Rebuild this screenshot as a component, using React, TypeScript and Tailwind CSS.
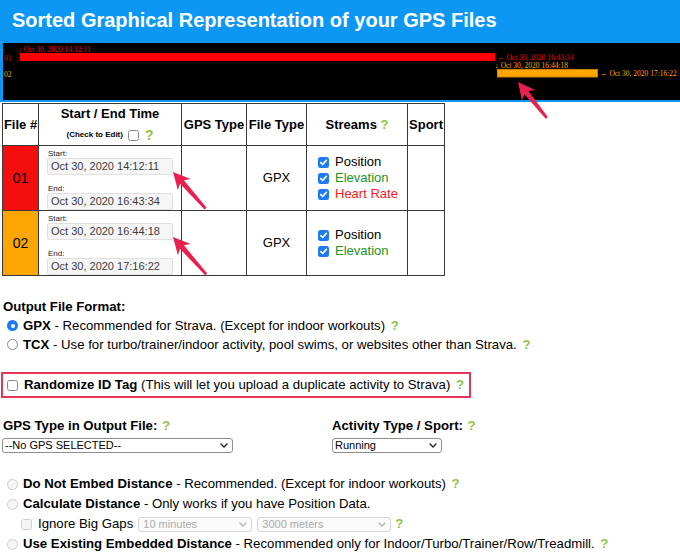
import React from "react";

const Q = ({ className = "" }: { className?: string }) => (
  <span className={"font-bold text-[#8cc63f] " + className}>?</span>
);

function CheckOn() {
  return (
    <span className="inline-flex w-[11px] h-[11px] rounded-[2.5px] bg-[#1e7bf2] items-center justify-center shrink-0">
      <svg width="9" height="9" viewBox="0 0 9 9">
        <path d="M1.8 4.6 L3.7 6.5 L7.3 2.4" fill="none" stroke="white" strokeWidth="1.7" strokeLinecap="round" strokeLinejoin="round" />
      </svg>
    </span>
  );
}

function CheckOff({ light }: { light?: boolean }) {
  return (
    <span
      className={
        light
          ? "inline-block w-[11px] h-[11px] rounded-[2.5px] border border-[#cfcfcf] bg-[#f5f5f5] shrink-0"
          : "inline-block w-[11px] h-[11px] rounded-[2.5px] border border-[#8a8a8a] bg-white shrink-0"
      }
    />
  );
}

function RadioOn() {
  return (
    <span className="inline-flex w-[11px] h-[11px] rounded-full bg-[#1e7bf2] items-center justify-center shrink-0">
      <span className="w-[4px] h-[4px] rounded-full bg-white" />
    </span>
  );
}

function RadioOff({ light }: { light?: boolean }) {
  return (
    <span
      className={
        light
          ? "inline-block w-[11px] h-[11px] rounded-full border border-[#cdcdcd] bg-[#f6f6f6] shrink-0"
          : "inline-block w-[11px] h-[11px] rounded-full border border-[#8a8a8a] bg-white shrink-0"
      }
    />
  );
}

function Chevron({ light }: { light?: boolean }) {
  return (
    <svg width="8" height="5" viewBox="0 0 8 5" className="absolute right-[5px] top-[5px] pointer-events-none">
      <path d="M1 1 L4 4 L7 1" fill="none" stroke={light ? "#b5b5b5" : "#222"} strokeWidth="1.4" strokeLinecap="round" strokeLinejoin="round" />
    </svg>
  );
}

function Select({ text, wClass, light }: { text: string; wClass: string; light?: boolean }) {
  return (
    <div className={"relative h-[15px] " + wClass}>
      <select
        className={
          light
            ? "block appearance-none w-full h-[15px] border border-[#d6d6d6] rounded-[3px] bg-[#fbfbfb] text-[11px] leading-[13px] pl-[4px] text-[#a9a9a9] outline-none"
            : "block appearance-none w-full h-[15px] border border-[#8e8e8e] rounded-[3px] bg-white text-[11px] leading-[13px] pl-[2px] text-black outline-none"
        }
        defaultValue={text}
      >
        <option>{text}</option>
      </select>
      <Chevron light={light} />
    </div>
  );
}

function TimeBox({ value }: { value: string }) {
  return (
    <div className="h-[17px] border border-[#e0e0e0] rounded-[2px] bg-[#f6f6f6] text-[11px] leading-[15px] pl-[3px] text-[#3c3c3c]">
      {value}
    </div>
  );
}

function Arrow({ tx, ty, angle, len }: { tx: number; ty: number; angle: number; len: number }) {
  return (
    <g transform={`translate(${tx} ${ty}) rotate(${angle})`}>
      <polygon
        points={`0,0 17,-8.5 13.5,-2.6 ${len},-1.4 ${len},1.4 13.5,2.6 17,8.5`}
        fill="#e9204d"
      />
    </g>
  );
}

export default function App() {
  const td = "border border-[#3a3a3a] p-0";
  return (
    <div className="relative w-[680px] h-[556px] overflow-hidden bg-white text-black text-[13px] font-['Liberation_Sans',Arial,sans-serif]">
      {/* header */}
      <div className="bg-[#0d97f5] pl-[3px] pb-[2px]">
        <h1 className="h-[43px] leading-[41px] pl-[9px] text-[20px] font-bold text-white">
          Sorted Graphical Representation of your GPS Files
        </h1>
        <div className="bg-black h-[57px]">
          <svg width="677" height="57" className="block font-['Liberation_Serif',serif]">
            <text x="15" y="9" fontSize="7.5" fill="#ff0000">↓ Oct 30, 2020 14:12:11</text>
            <text x="1" y="18" fontSize="7.5" fill="#ff0000">01</text>
            <rect x="17" y="10" width="475" height="8" fill="#ff0000" />
            <text x="494" y="16.5" fontSize="7.5" fill="#ff0000">← Oct 30, 2020 16:43:34</text>
            <text x="492" y="25.3" fontSize="7.5" fill="#ffa500">↓ Oct 30, 2020 16:44:18</text>
            <text x="1" y="34" fontSize="7.5" fill="#ffa500">02</text>
            <rect x="494.5" y="26.5" width="100" height="7.5" fill="#ffa500" stroke="#c98300" strokeWidth="1" />
            <text x="597" y="32.5" fontSize="7.5" fill="#ffa500">← Oct 30, 2020 17:16:22</text>
          </svg>
        </div>
      </div>

      {/* table */}
      <table className="ml-[2px] mt-[1px] border-collapse table-fixed w-[443px]">
        <colgroup>
          <col className="w-[36px]" />
          <col className="w-[143px]" />
          <col className="w-[65px]" />
          <col className="w-[60px]" />
          <col className="w-[101px]" />
          <col className="w-[37px]" />
        </colgroup>
        <thead>
          <tr className="h-[42px]">
            <th className={td + " font-bold text-center"}>File #</th>
            <th className={td + " font-bold align-top"}>
              <div className="mt-[2px] h-[16px] leading-[16px] text-center">Start / End Time</div>
              <div className="mt-[5px] h-[16px] flex items-center justify-center">
                <span className="text-[8px] font-bold">(Check to Edit)</span>
                <span className="ml-[5px] inline-flex">
                  <CheckOff />
                </span>
                <Q className="ml-[6px] text-[14px] leading-[16px]" />
              </div>
            </th>
            <th className={td + " font-bold text-center whitespace-nowrap"}>GPS Type</th>
            <th className={td + " font-bold text-center whitespace-nowrap"}>File Type</th>
            <th className={td + " font-bold text-center"}>
              Streams <Q />
            </th>
            <th className={td + " font-bold text-center"}>Sport</th>
          </tr>
        </thead>
        <tbody>
          {[
            {
              n: "01",
              bg: "bg-[#f40e0e]",
              s: "Oct 30, 2020 14:12:11",
              e: "Oct 30, 2020 16:43:34",
              streams: [
                ["Position", "text-black"],
                ["Elevation", "text-[#1e931e]"],
                ["Heart Rate", "text-[#f51b1b]"],
              ],
            },
            {
              n: "02",
              bg: "bg-[#fba602]",
              s: "Oct 30, 2020 16:44:18",
              e: "Oct 30, 2020 17:16:22",
              streams: [
                ["Position", "text-black"],
                ["Elevation", "text-[#1e931e]"],
              ],
            },
          ].map((r) => (
            <tr key={r.n} className="h-[65px]">
              <td className={td + " text-center text-[14px] " + r.bg}>{r.n}</td>
              <td className={td + " align-top"}>
                <div className="px-[8px] pt-[3px]">
                  <div className="text-[8px] leading-[9px] pl-[1px] text-[#222]">Start:</div>
                  <TimeBox value={r.s} />
                  <div className="mt-[9px] text-[8px] leading-[9px] pl-[1px] text-[#222]">End:</div>
                  <TimeBox value={r.e} />
                </div>
              </td>
              <td className={td}></td>
              <td className={td + " text-center"}>GPX</td>
              <td className={td}>
                <div className="pl-[11px]">
                  {r.streams.map(([label, color]) => (
                    <div key={label} className="flex items-center h-[16px]">
                      <CheckOn />
                      <span className={"ml-[6px] " + color}>{label}</span>
                    </div>
                  ))}
                </div>
              </td>
              <td className={td}></td>
            </tr>
          ))}
        </tbody>
      </table>

      {/* form */}
      <div className="pl-[3px] text-[13.2px]">
        <div className="mt-[21px] h-[19px] leading-[19px] font-bold">Output File Format:</div>
        <div className="h-[19px] flex items-center pl-[4px]">
          <RadioOn />
          <span className="ml-[5px]">
            <b>GPX</b> - Recommended for Strava. (Except for indoor workouts) <Q className="ml-[2px]" />
          </span>
        </div>
        <div className="h-[19px] flex items-center pl-[4px]">
          <RadioOff />
          <span className="ml-[5px]">
            <b>TCX</b> - Use for turbo/trainer/indoor activity, pool swims, or websites other than Strava.{" "}
            <Q className="ml-[2px]" />
          </span>
        </div>
        <div className="mt-[18px] -ml-[2px] w-[470px] h-[26px] border-2 border-[#e4365a] flex items-center pl-[4px]">
          <CheckOff />
          <span className="ml-[6px]">
            <b>Randomize ID Tag</b> (This will let you upload a duplicate activity to Strava) <Q className="ml-[2px]" />
          </span>
        </div>

        <div className="mt-[18px] flex">
          <div className="w-[329px]">
            <div className="h-[19px] leading-[19px] font-bold">
              GPS Type in Output File: <Q className="ml-[1px]" />
            </div>
            <div className="mt-[3px]">
              <Select text="--No GPS SELECTED--" wClass="w-[231px] -ml-[1px]" />
            </div>
          </div>
          <div>
            <div className="h-[19px] leading-[19px] font-bold">
              Activity Type / Sport: <Q className="ml-[1px]" />
            </div>
            <div className="mt-[3px]">
              <Select text="Running" wClass="w-[110px]" />
            </div>
          </div>
        </div>

        <div className="mt-[21px]">
          <div className="h-[20px] flex items-center pl-[4px]">
            <RadioOff light />
            <span className="ml-[5px]">
              <b>Do Not Embed Distance</b> - Recommended. (Except for indoor workouts) <Q className="ml-[2px]" />
            </span>
          </div>
          <div className="h-[20px] flex items-center pl-[4px]">
            <RadioOff light />
            <span className="ml-[5px]">
              <b>Calculate Distance</b> - Only works if you have Position Data.
            </span>
          </div>
          <div className="h-[20px] flex items-center pl-[18px]">
            <CheckOff light />
            <span className="ml-[6px]">Ignore Big Gaps</span>
            <Select text="10 minutes" wClass="ml-[5px] w-[114px]" light />
            <Select text="3000 meters" wClass="ml-[5px] w-[134px]" light />
            <Q className="ml-[4px]" />
          </div>
          <div className="h-[20px] flex items-center pl-[4px]">
            <RadioOff light />
            <span className="ml-[5px]">
              <b>Use Existing Embedded Distance</b> - Recommended only for Indoor/Turbo/Trainer/Row/Treadmill.{" "}
              <Q className="ml-[2px]" />
            </span>
          </div>
        </div>
      </div>

      {/* annotation arrows */}
      <svg className="absolute inset-0 pointer-events-none" width="680" height="556">
        <Arrow tx={173} ty={172} angle={48.4} len={49} />
        <Arrow tx={173} ty={237} angle={48.4} len={50} />
        <Arrow tx={518} ty={82} angle={51.3} len={46} />
      </svg>
    </div>
  );
}
